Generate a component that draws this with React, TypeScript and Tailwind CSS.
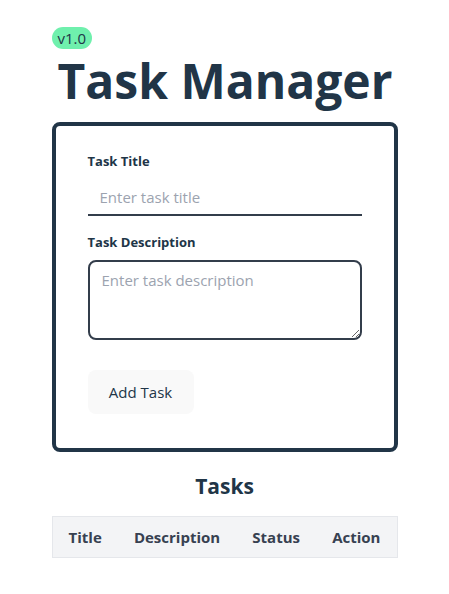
export default function App() {
  return (
    <div className="min-h-screen bg-white font-['Open_Sans',sans-serif] text-[#213547]">
      <div className="mx-auto flex w-[346px] flex-col pt-[27px]">
        <span className="w-fit rounded-full bg-[#6ff0ad] px-[6px] py-[1px] text-[15px] leading-[20px] text-[#213547]">
          v1.0
        </span>
        <h1 className="mt-[1px] pl-[6px] text-[48px] leading-[62px] font-bold whitespace-nowrap">
          Task Manager
        </h1>
        <form className="mt-[10px] flex flex-col rounded-lg border-4 border-[#213547] px-[32px] pt-[26px] pb-[34px]">
          <label className="text-[13px] leading-[18px] font-bold">Task Title</label>
          <input
            type="text"
            placeholder="Enter task title"
            className="mt-[9px] h-[37px] border-b-2 border-[#333d4b] px-[12px] text-[15px] outline-none placeholder:text-[#9ca3af]"
          />
          <label className="mt-[17px] text-[13px] leading-[18px] font-bold">Task Description</label>
          <textarea
            placeholder="Enter task description"
            className="mt-[9px] h-[80px] rounded-lg border-2 border-[#333d4b] px-[12px] py-[7px] text-[15px] outline-none placeholder:text-[#9ca3af]"
          />
          <button
            type="button"
            className="mt-[30px] h-[44px] w-[106px] rounded-lg bg-[#f9f9f9] text-[15px] font-medium text-[#213547]"
          >
            Add Task
          </button>
        </form>
        <h2 className="mt-[20px] text-center text-[21px] leading-[28px] font-bold">Tasks</h2>
        <table className="mt-[16px] w-full border border-[#e5e7eb] bg-[#f3f4f6]">
          <thead>
            <tr className="h-[41px] text-[15px] font-bold text-[#374151]">
              <th className="px-[16px]">Title</th>
              <th className="px-[16px]">Description</th>
              <th className="px-[16px]">Status</th>
              <th className="px-[16px]">Action</th>
            </tr>
          </thead>
        </table>
      </div>
    </div>
  );
}
